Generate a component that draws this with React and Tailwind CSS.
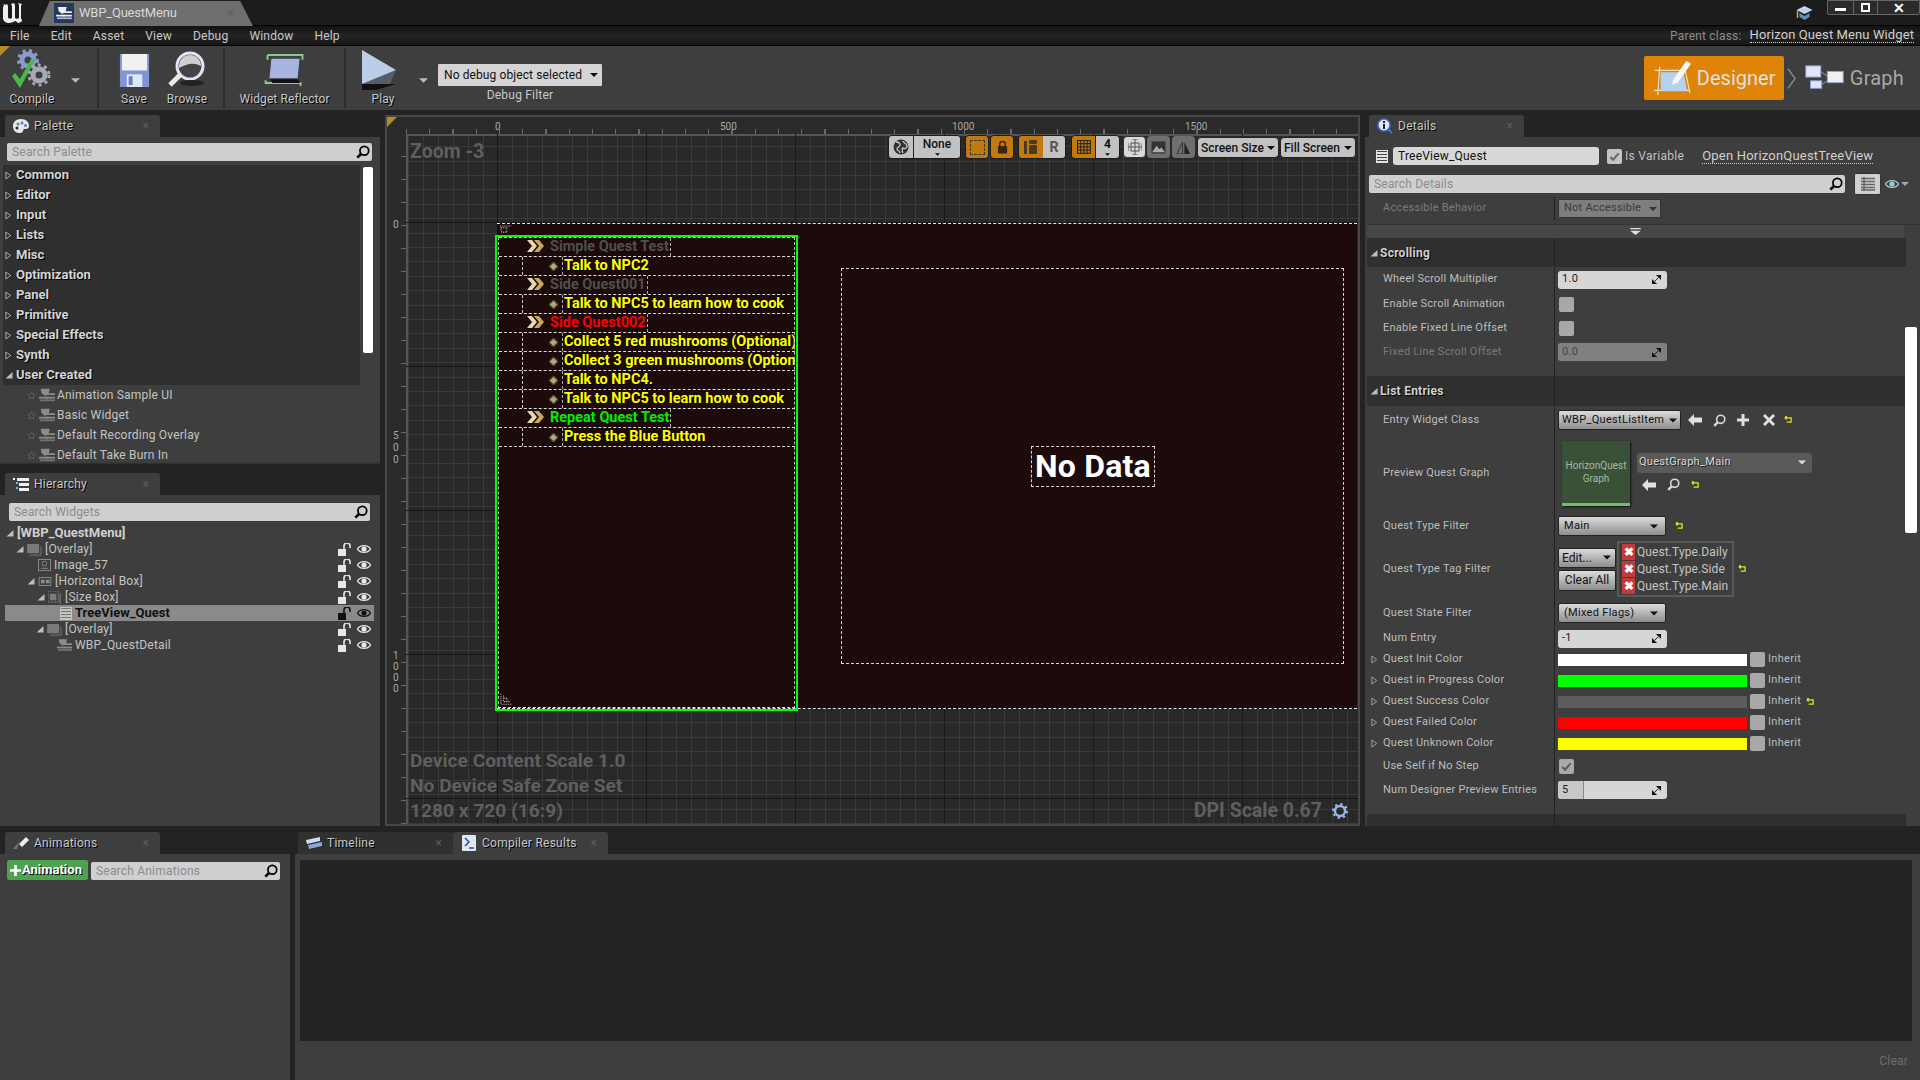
import React from "react";

const WidgetIcon = ({ c = "#8c8c8c", cls = "w-4 h-4" }) => (
  <svg viewBox="0 0 18 16" className={cls}>
    <path d="M2 1h10l-1 5-4 3-4-3z" fill={c} />
    <rect x="0" y="10" width="10" height="2" fill={c} />
    <rect x="8" y="6" width="10" height="2" fill={c} />
    <rect x="8" y="10" width="10" height="2" fill={c} />
    <rect x="1" y="13" width="17" height="2" fill={c} opacity=".7" />
  </svg>
);
const Search = ({ cls = "w-[14px] h-[14px]", c = "#000" }) => (
  <svg viewBox="0 0 16 16" className={cls}>
    <circle cx="9.5" cy="6.5" r="5" fill="none" stroke={c} strokeWidth="2" />
    <path d="M6 10L1.5 14.5" stroke={c} strokeWidth="3" />
  </svg>
);
const Caret = ({ c = "#111", cls = "w-[9px] h-[5px]" }) => (
  <svg viewBox="0 0 10 5" className={cls}><path d="M0 0h10L5 5z" fill={c} /></svg>
);
const TriOpen = ({ c = "#bdbdbd" }) => (
  <svg viewBox="0 0 8 8" className="w-2 h-2 shrink-0"><path d="M7.5 1v6.5H.5z" fill={c} /></svg>
);
const TriClosed = ({ c = "#bdbdbd" }) => (
  <svg viewBox="0 0 8 10" className="w-[7px] h-[9px] shrink-0"><path d="M1 1l5.5 4L1 9z" fill="none" stroke={c} strokeWidth="1" /></svg>
);
const Reset = () => (
  <svg viewBox="0 0 9 9" className="w-[8px] h-[8px]"><path d="M1 2h7v5H3M1 2l2-2M1 2l2 2" fill="none" stroke="#e6e619" strokeWidth="1.4" /></svg>
);
const Lock = ({ c = "#e6e6e6" }) => (
  <svg viewBox="0 0 14 13" className="w-[14px] h-[13px]">
    <rect x="0" y="6" width="8" height="7" fill={c} />
    <path d="M6 6V3a3 3 0 0 1 6 0v2" fill="none" stroke={c} strokeWidth="1.6" />
  </svg>
);
const Eye = ({ c = "#e6e6e6" }) => (
  <svg viewBox="0 0 14 10" className="w-[14px] h-[10px]">
    <path d="M0.5 5C3 0.5 11 0.5 13.5 5 11 9.5 3 9.5 0.5 5z" fill="none" stroke={c} strokeWidth="1.3" />
    <circle cx="7" cy="5" r="2.6" fill={c} />
  </svg>
);
const ArrowL = () => (
  <svg viewBox="0 0 14 12" className="w-[14px] h-[12px]"><path d="M0 6l6-6v3.5h8v5H6V12z" fill="#e0e0e0" /></svg>
);
const Mag = () => <Search c="#d8d8d8" cls="w-[13px] h-[13px]" />;
const Spin = () => (
  <svg viewBox="0 0 10 10" className="w-[9px] h-[9px]"><path d="M5 0h5v5zM0 5v5h5z M3 7l4-4" fill="#111" stroke="#111" /></svg>
);
const Star = () => (
  <svg viewBox="0 0 10 10" className="w-[9px] h-[9px]"><path d="M5 .8l1.2 2.9 3 .2-2.3 2 .8 3L5 7.3 2.3 8.9l.8-3L.8 3.9l3-.2z" fill="none" stroke="#666" strokeWidth=".8" /></svg>
);
const Close = () => <span className="text-[#5c5c5c] text-[12px] leading-none">×</span>;

const Tab = ({ icon, label, w = "w-[155px]", bg = "bg-[#3e3e3e]", x = "ml-[5px]" }) => (
  <div className={`${x} ${w} ${bg} h-[22px] rounded-t-[3px] flex items-center pl-[6px] pr-[11px] shrink-0`}>
    <span className="w-[20px] flex items-center justify-center shrink-0">{icon}</span>
    <span className="ml-[3px] text-[12px] text-[#c8c8c8] tracking-[0.25px] [text-shadow:1px_1px_0_#000] grow">{label}</span>
    <Close />
  </div>
);

const SearchBox = ({ ph, cls }) => (
  <div className={`h-[18px] bg-[#cfcfcf] rounded-[2px] flex items-center justify-between pl-[5px] pr-[2px] ${cls}`}>
    <span className="text-[12px] text-[#8c8c8c] tracking-[0.2px]">{ph}</span>
    <Search />
  </div>
);

const ToolBtn = ({ label, w, children }) => (
  <div className={`${w} h-full flex flex-col items-center shrink-0`}>
    <div className="h-[45px] flex items-center justify-center">{children}</div>
    <span className="text-[12px] text-[#c8c8c8] leading-[14px] [text-shadow:1px_1px_0_#000] tracking-[0.1px]">{label}</span>
  </div>
);

const Sep = () => <div className="w-[2px] h-[60px] bg-[#2c2c2c] shrink-0" />;

const cats = ["Common", "Editor", "Input", "Lists", "Misc", "Optimization", "Panel", "Primitive", "Special Effects", "Synth"];
const userItems = ["Animation Sample UI", "Basic Widget", "Default Recording Overlay", "Default Take Burn In"];

function Palette() {
  return (
    <div className="flex flex-col h-[351px] shrink-0">
      <Tab
        label="Palette"
        icon={
          <svg viewBox="0 0 16 14" className="w-4 h-[14px]">
            <path d="M8 0c5 0 8 3 8 7 0 3-3 3-4 3s-2 .5-2 2-2 2-4 2C2 14 0 11 0 7s3-7 8-7z" fill="#e8e8e8" />
            <circle cx="5" cy="5" r="1.5" fill="#5a7fc0" /><circle cx="9" cy="4" r="1.5" fill="#5a7fc0" /><circle cx="12.5" cy="6.5" r="1.5" fill="#5a7fc0" /><circle cx="4" cy="9" r="1.5" fill="#2b2b2b" />
          </svg>
        }
      />
      <div className="bg-[#3e3e3e] h-[329px] pt-[6px] pl-[7px] pr-[8px] relative shrink-0">
        <SearchBox ph="Search Palette" cls="w-[365px]" />
        <div className="-ml-[4px] mt-[4px] flex">
          <div className="w-[357px] shrink-0">
            {cats.concat(["User Created"]).map((c) => (
              <div key={c} className="h-[20px] bg-[#2f2f2f] flex items-center pl-[2px]">
                {c === "User Created" ? <TriOpen /> : <TriClosed />}
                <span className={`${c === "User Created" ? "ml-[3px]" : "ml-[4px]"} text-[13px] font-bold text-[#d4d4d4] [text-shadow:1px_1px_0_#000]`}>{c}</span>
              </div>
            ))}
            {userItems.map((c) => (
              <div key={c} className="h-[20px] flex items-center pl-[24px] overflow-hidden">
                <Star />
                <span className="ml-[3px]"><WidgetIcon /></span>
                <span className="ml-[2px] text-[12px] text-[#c4c4c4] tracking-[0.2px]">{c}</span>
              </div>
            ))}
          </div>
          <div className="ml-[3px] w-[10px] h-[186px] mt-[2px] bg-white rounded-[2px] shrink-0" />
        </div>
        <div className="absolute left-0 right-0 bottom-0 h-[4px] bg-linear-to-b from-[#2a2a2a00] to-[#1a1a1a]" />
      </div>
    </div>
  );
}

const tree = [
  { l: "[WBP_QuestMenu]", pad: "pl-[1px]", bold: true, tri: true, hdr: true },
  { l: "[Overlay]", pad: "pl-[11px]", tri: true, k: "ov" },
  { l: "Image_57", pad: "pl-[33px]", k: "img" },
  { l: "[Horizontal Box]", pad: "pl-[22px]", tri: true, k: "hb" },
  { l: "[Size Box]", pad: "pl-[32px]", tri: true, k: "sb" },
  { l: "TreeView_Quest", pad: "pl-[55px]", sel: true, k: "tv" },
  { l: "[Overlay]", pad: "pl-[31px]", tri: true, k: "ov" },
  { l: "WBP_QuestDetail", pad: "pl-[52px]", k: "w" },
];

const TreeIcon = ({ k }) => {
  if (k === "ov") return <svg viewBox="0 0 16 14" className="w-[15px] h-[13px]"><rect x="0" y="1" width="13" height="10" rx="1" fill="#7a7a7a" /><path d="M15 4v9H3" fill="none" stroke="#7a7a7a" /></svg>;
  if (k === "img") return <svg viewBox="0 0 14 14" className="w-[13px] h-[13px]"><rect x=".5" y=".5" width="13" height="12" fill="none" stroke="#8c8c8c" /><circle cx="7" cy="5" r="2.5" fill="none" stroke="#8c8c8c" /><path d="M3 10h8" stroke="#8c8c8c" /></svg>;
  if (k === "hb") return <svg viewBox="0 0 14 10" className="w-[14px] h-[9px]"><rect x=".5" y=".5" width="13" height="9" fill="none" stroke="#8c8c8c" /><rect x="2.5" y="3" width="4" height="4" fill="#8c8c8c" /><rect x="8" y="3" width="4" height="4" fill="#8c8c8c" /></svg>;
  if (k === "sb") return <svg viewBox="0 0 15 14" className="w-[14px] h-[13px]"><rect x="0" y="0" width="11" height="12" fill="none" stroke="#8c8c8c" strokeDasharray="1.5 1" /><rect x="2" y="3" width="7" height="7" fill="#7a7a7a" /><path d="M14 3h-1v10h1" fill="none" stroke="#8c8c8c" /></svg>;
  if (k === "tv") return <div className="w-[12px] h-[13px] bg-[#c4c4c4] flex flex-col justify-evenly px-[1px]"><div className="h-px bg-[#777]" /><div className="h-px bg-[#777]" /><div className="h-px bg-[#777]" /><div className="h-px bg-[#777]" /></div>;
  if (k === "w") return <WidgetIcon cls="w-[15px] h-[14px]" />;
  return null;
};

function Hierarchy() {
  return (
    <div className="flex flex-col mt-[7px] grow">
      <Tab
        label="Hierarchy"
        icon={
          <svg viewBox="0 0 16 13" className="w-4 h-[13px]">
            <rect x="0" y="0" width="2" height="2" fill="#fff" /><rect x="4" y="0" width="12" height="3" fill="#eee" /><rect x="3" y="4" width="2" height="2" fill="#6fb6e8" /><rect x="6" y="5" width="10" height="3" fill="#eee" /><rect x="3" y="9" width="2" height="2" fill="#6fb6e8" /><rect x="6" y="10" width="10" height="3" fill="#eee" />
          </svg>
        }
      />
      <div className="bg-[#3e3e3e] grow pt-[8px] pl-[9px] relative">
        <SearchBox ph="Search Widgets" cls="w-[361px]" />
        <div className="-ml-[9px] mt-[4px] w-[379px]">
          {tree.map((r, i) => (
            <div key={i} className={`h-[16px] flex items-center ml-[5px] w-[369px] pr-[3px] ${r.pad} ${r.sel ? "bg-[#8a8a8a]" : ""}`}>
              {r.tri && <span className="mr-[3px]"><TriOpen /></span>}
              {r.k && <span className="mr-[3px] flex items-center"><TreeIcon k={r.k} /></span>}
              <span className={`${r.sel ? "font-bold text-[#111] text-[13px]" : r.hdr ? "font-bold text-[#d0d0d0] text-[13px]" : "text-[#c4c4c4] text-[12px] tracking-[0.2px]"} grow`}>{r.l}</span>
              {!r.hdr && (
                <span className="flex items-center gap-[5px]">
                  <Lock c={r.sel ? "#111" : "#e6e6e6"} />
                  <Eye c={r.sel ? "#111" : "#e6e6e6"} />
                </span>
              )}
            </div>
          ))}
        </div>
      </div>
    </div>
  );
}

const VGroup = ({ children, cls = "" }) => (
  <div className={`flex h-[24px] rounded-[4px] overflow-hidden border border-[#1c1c1c] shrink-0 ${cls}`}>{children}</div>
);
const Drop = ({ w, label }) => (
  <div className={`${w} h-[21px] mt-[2px] rounded-[4px] border border-[#222] bg-[#c2c2c2] flex items-center justify-between px-[3px] shrink-0`}>
    <span className="text-[12px] font-medium text-[#111]">{label}</span>
    <Caret cls="w-[8px] h-[4px]" />
  </div>
);

const questRows = [
  { t: "p", l: "Simple Quest Test", c: "text-[#4f4f4f]" },
  { t: "c", l: "Talk to NPC2" },
  { t: "p", l: "Side Quest001", c: "text-[#4f4f4f]" },
  { t: "c", l: "Talk to NPC5 to learn how to cook" },
  { t: "p", l: "Side Quest002", c: "text-[#ff0000]" },
  { t: "c", l: "Collect 5 red mushrooms (Optional)" },
  { t: "c", l: "Collect 3 green mushrooms (Optional)" },
  { t: "c", l: "Talk to NPC4." },
  { t: "c", l: "Talk to NPC5 to learn how to cook" },
  { t: "p", l: "Repeat Quest Test", c: "text-[#00ee00]" },
  { t: "c", l: "Press the Blue Button" },
];

const Chevrons = () => (
  <svg viewBox="0 0 18 12" className="w-[18px] h-[12px] shrink-0">
    <path d="M0 0h5l5 6-5 6H0l5-6z" fill="#e6d9b0" />
    <path d="M7 0h5l5 6-5 6H7l5-6z" fill="#c9a85c" />
  </svg>
);
const Diamond = () => (
  <svg viewBox="0 0 10 10" className="w-[9px] h-[9px] shrink-0"><path d="M5 0l5 5-5 5-5-5z" fill="#b8a878" stroke="#443" strokeWidth="1.5" /></svg>
);

function Viewport() {
  return (
    <div className="w-[975px] h-full relative overflow-hidden bg-[#2a2a2a] border-2 border-[#474747] shrink-0">
      <div className="absolute left-[19px] top-[17px] right-0 bottom-0 border-l-2 border-t-2 border-[#555] bg-[#282828] bg-[image:repeating-linear-gradient(90deg,#3a3a3a_0,#3a3a3a_1px,transparent_1px,transparent_14.9px),repeating-linear-gradient(0deg,#3a3a3a_0,#3a3a3a_1px,transparent_1px,transparent_14.4px)]" />
      <div className="absolute left-[110px] top-[17px] bottom-0 w-full bg-[image:repeating-linear-gradient(90deg,#181818_0,#181818_1px,transparent_1px,transparent_149px)]" />
      <div className="absolute left-[19px] top-[105px] bottom-0 right-0 bg-[image:repeating-linear-gradient(180deg,#181818_0,#181818_1px,transparent_1px,transparent_144px)]" />

      <div className="absolute left-0 top-0 w-0 h-0 border-t-[10px] border-r-[10px] border-t-[#b58a20] border-r-transparent" />

      <span className="absolute left-[108px] top-[2px] text-[10px] text-[#a8a8a8]">0</span>
      <span className="absolute left-[333px] top-[2px] text-[10px] text-[#a8a8a8]">500</span>
      <span className="absolute left-[565px] top-[2px] text-[10px] text-[#a8a8a8]">1000</span>
      <span className="absolute left-[798px] top-[2px] text-[10px] text-[#a8a8a8]">1500</span>
      <div className="absolute left-[19px] top-[12px] right-0 h-[5px] bg-[image:repeating-linear-gradient(90deg,#6a6a6a_0,#6a6a6a_1px,transparent_1px,transparent_23.25px)]" />
      <div className="absolute left-[14px] top-[17px] bottom-0 w-[5px] bg-[image:repeating-linear-gradient(0deg,#6a6a6a_0,#6a6a6a_1px,transparent_1px,transparent_23px)]" />
      <span className="absolute left-[6px] top-[100px] text-[10px] text-[#a8a8a8]">0</span>
      <div className="absolute left-[6px] top-[313px] flex flex-col text-[10px] leading-[12px] text-[#a8a8a8]"><span>5</span><span>0</span><span>0</span></div>
      <div className="absolute left-[6px] top-[533px] flex flex-col text-[10px] leading-[11px] text-[#a8a8a8]"><span>1</span><span>0</span><span>0</span><span>0</span></div>

      <div className="absolute left-[110px] top-[106px] w-[860px] h-[486px] bg-[#1c0a08f0] border-y border-dashed border-[#e8e8e8]">
        <div className="absolute left-[344px] top-[44px] w-[503px] h-[396px] border border-dashed border-[#d8d8d8]" />
        <div className="absolute left-[534px] top-[222px] w-[124px] h-[41px] border border-dashed border-[#d8d8d8] flex items-center justify-center pb-[2px]">
          <span className="text-[32px] font-bold text-white leading-none whitespace-nowrap tracking-[0.2px]">No Data</span>
        </div>
        <div className="absolute -left-[2px] top-[11px] w-[303px] h-[476px] border-[2px] border-[#00ff00] pl-[2px] pr-[1px]">
          <div className="border-t border-dashed border-[#ddd]">
            {questRows.map((r, i) => (
              <div key={i} className="h-[19px] flex items-center border-b border-dashed border-[#ddd] overflow-hidden whitespace-nowrap">
                {r.t === "p" ? (
                  <>
                    <span className="ml-[28px] -mt-[2px]"><Chevrons /></span>
                    <span className={`ml-[5px] pr-[1px] border-r border-dashed border-[#aaa] h-full leading-[17px] text-[14.5px] font-bold ${r.c}`}>{r.l}</span>
                  </>
                ) : (
                  <>
                    <span className="ml-[23px] w-px h-full border-l border-dashed border-[#ccc]" />
                    <span className="ml-[26px]"><Diamond /></span>
                    <span className="ml-[4px] pl-[1px] border-l border-dashed border-[#aaa] h-full leading-[17px] text-[14.5px] font-bold text-[#ffff00] [text-shadow:1px_1px_0_#000]">{r.l}</span>
                  </>
                )}
              </div>
            ))}
          </div>
          <div className="absolute right-[1px] top-0 bottom-0 border-r border-dashed border-[#bbb]" />
          <div className="absolute left-[1px] top-0 bottom-0 border-l border-dashed border-[#bbb]" />
          <div className="absolute left-[1px] right-[1px] bottom-[1px] border-b border-dashed border-[#ddd]" />
          <svg viewBox="0 0 16 16" className="absolute left-[3px] bottom-[3px] w-[14px] h-[14px]"><path d="M1 2v12h12M4 4v7h7M4 7h4v4" fill="none" stroke="#aaa" strokeWidth="1.2" strokeDasharray="1.5 1" /></svg>
        </div>
        <svg viewBox="0 0 16 10" className="absolute left-[2px] top-[1px] w-[14px] h-[9px]"><path d="M1 1h13M2 3h7v5H3z" fill="none" stroke="#aaa" strokeWidth="1.2" strokeDasharray="1.5 1" /></svg>
      </div>

      <span className="absolute left-[23px] top-[21px] text-[19.500px] font-bold leading-[28px] text-[#5f5f5f]">Zoom -3</span>
      <div className="absolute left-[23px] top-[631px] flex flex-col text-[19.200px] font-bold leading-[25px] text-[#5f5f5f]">
        <span>Device Content Scale 1.0</span>
        <span>No Device Safe Zone Set</span>
        <span>1280 x 720 (16:9)</span>
      </div>
      <div className="absolute right-[10px] bottom-[1px] flex items-center gap-[10px]">
        <span className="text-[19.500px] font-bold leading-[25px] text-[#5f5f5f]">DPI Scale 0.67</span>
        <svg viewBox="0 0 16 16" className="w-4 h-4">
          <circle cx="8" cy="8" r="5" fill="none" stroke="#9db4ea" strokeWidth="2.4" />
          <circle cx="8" cy="8" r="7" fill="none" stroke="#9db4ea" strokeWidth="2" strokeDasharray="2.4 3.1" />
        </svg>
      </div>

      <div className="absolute left-[501px] top-[18px] flex items-start">
        <VGroup cls="w-[73px]">
          <div className="w-[25px] bg-[#c2c2c2] border-r border-[#222] flex items-center justify-center">
            <svg viewBox="0 0 16 16" className="w-4 h-4"><circle cx="8" cy="8" r="7.5" fill="#333" /><path d="M3 3c3 0 4 1 4 3S4 8 4 10s3 1 3 4M10 2c0 2 4 2 4 5s-3 3-4 2-1 3 0 5" fill="none" stroke="#ccc" strokeWidth="1.3" /></svg>
          </div>
          <div className="grow bg-[#c2c2c2] flex flex-col items-center pt-[1px]">
            <span className="text-[12px] font-medium leading-[15px] text-[#111]">None</span>
            <Caret cls="w-[5px] h-[3px] mt-[1px]" />
          </div>
        </VGroup>
        <VGroup cls="w-[24px] ml-[4px]">
          <div className="grow bg-[#c07a10] flex items-center justify-center"><div className="w-[15px] h-[15px] border border-dashed border-[#4a3a22]" /></div>
        </VGroup>
        <VGroup cls="w-[24px] ml-[1px]">
          <div className="grow bg-[#c07a10] flex items-center justify-center">
            <svg viewBox="0 0 12 14" className="w-[11px] h-[14px]"><rect x="1" y="6" width="10" height="8" rx="1" fill="#3a2510" /><path d="M3 6V4a3 3 0 0 1 6 0v2" fill="none" stroke="#3a2510" strokeWidth="1.5" /></svg>
          </div>
        </VGroup>
        <VGroup cls="w-[48px] ml-[4px]">
          <div className="w-[24px] bg-[#c07a10] flex items-center justify-center">
            <svg viewBox="0 0 14 14" className="w-[14px] h-[14px]"><rect x="0" y="1" width="3" height="13" fill="#4a3a22" /><rect x="5" y="5" width="8" height="9" rx="1" fill="#4a3a22" /><rect x="5" y="0" width="8" height="4" rx="1" fill="#4a3a22" /></svg>
          </div>
          <div className="grow bg-[#c2c2c2] flex items-center justify-center text-[14px] font-bold text-[#555]">R</div>
        </VGroup>
        <VGroup cls="w-[49px] ml-[5px]">
          <div className="w-[24px] bg-[#c07a10] border-r border-[#222] flex items-center justify-center">
            <svg viewBox="0 0 14 14" className="w-[14px] h-[14px]"><path d="M.5 0v14M3.7 0v14M6.9 0v14M10.1 0v14M13.3 0v14M0 .5h14M0 3.7h14M0 6.9h14M0 10.1h14M0 13.3h14" stroke="#222" strokeWidth="1" /></svg>
          </div>
          <div className="grow bg-[#c2c2c2] flex flex-col items-center pt-[1px]">
            <span className="text-[12px] font-bold leading-[15px] text-[#111]">4</span>
            <Caret cls="w-[5px] h-[3px] mt-[1px]" />
          </div>
        </VGroup>
        <div className="w-[23px] h-[22px] mt-[1px] ml-[3px] rounded-[4px] bg-[#d8d8d8] border border-[#333] flex items-center justify-center shrink-0">
          <svg viewBox="0 0 14 16" className="w-[14px] h-[16px]"><rect x="3" y="4" width="8" height="8" fill="none" stroke="#555" /><path d="M7 0v16M0 8h14M0 4v8M14 4v8M4 0h6M4 16h6" stroke="#555" fill="none" /></svg>
        </div>
        <div className="w-[23px] h-[22px] mt-[1px] ml-[1px] rounded-[4px] bg-[#6f6f6f] flex items-center justify-center shrink-0">
          <svg viewBox="0 0 16 14" className="w-[15px] h-[13px]"><rect x=".5" y=".5" width="15" height="13" fill="#333" /><path d="M1 12l5-7 3 4 2-2 4 5z" fill="#aaa" /></svg>
        </div>
        <div className="w-[23px] h-[22px] mt-[1px] ml-[2px] rounded-[4px] bg-[#6f6f6f] flex items-center justify-center shrink-0">
          <svg viewBox="0 0 16 14" className="w-[15px] h-[13px]"><path d="M7 1v13H1z" fill="none" stroke="#333" /><path d="M9 1v13h6z" fill="#222" /></svg>
        </div>
        <Drop w="w-[82px] ml-[2px]" label="Screen Size" />
        <Drop w="w-[76px] ml-[1px]" label="Fill Screen" />
      </div>
    </div>
  );
}

const Row = ({ h, label, dim, tri, children }) => (
  <div className={`${h} flex items-stretch shrink-0`}>
    <div className="w-[187px] shrink-0 flex items-center pl-[4px]">
      <span className="w-[12px] flex items-center">{tri && <TriClosed c="#aaa" />}</span>
      <span className={`text-[11px] tracking-[0.25px] whitespace-nowrap ${dim ? "text-[#7a7a7a]" : "text-[#bdbdbd]"}`}>{label}</span>
    </div>
    <div className="grow flex items-center pl-[3px] border-l border-[#222]">{children}</div>
  </div>
);

const Num = ({ v, dim, slider }) => (
  <div className={`w-[109px] h-[18px] rounded-[3px] flex items-center justify-between pr-[6px] relative ${dim ? "bg-[#808080]" : "bg-[#d6d6d6]"}`}>
    {slider && <div className="absolute left-0 top-0 bottom-0 w-[26px] bg-[#c8c8c8] border-r border-[#888] rounded-l-[3px]" />}
    <span className={`relative pl-[4px] text-[11px] ${dim ? "text-[#444]" : "text-[#222]"} tracking-[0.3px]`}>{v}</span>
    <Spin />
  </div>
);
const Check = ({ on }) => (
  <div className="w-[15px] h-[15px] ml-[1px] rounded-[2px] bg-[#a8a8a8] flex items-center justify-center">
    {on && <svg viewBox="0 0 12 12" className="w-[11px] h-[11px]"><path d="M1.5 6.5l3 3 6-7" fill="none" stroke="#5a5a5a" strokeWidth="2.2" /></svg>}
  </div>
);
const GDrop = ({ w, label }) => (
  <div className={`${w} h-[20px] rounded-[2px] border border-[#222] bg-linear-to-b from-[#dcdcdc] to-[#8e8e8e] flex items-center justify-between pl-[5px] pr-[7px]`}>
    <span className="text-[11px] tracking-[0.3px] text-[#111]">{label}</span>
    <Caret cls="w-[8px] h-[5px]" />
  </div>
);
const Section = ({ label, h }) => (
  <div className={`${h} bg-[#2f2f2f] rounded-[2px] flex items-stretch shrink-0 mr-[14px]`}>
    <div className="w-[187px] flex items-center pl-[3px] shrink-0">
      <TriOpen />
      <span className="ml-[2px] text-[12px] font-bold text-[#d0d0d0] [text-shadow:1px_1px_0_#000] tracking-[0.25px]">{label}</span>
    </div>
    <div className="border-l border-[#222]" />
  </div>
);

const ColorRow = ({ label, c, reset }) => (
  <Row h="h-[21px]" label={label} tri>
    <div className={`w-[189px] h-[12px] ${c}`} />
    <div className="w-[15px] h-[15px] ml-[3px] rounded-[2px] bg-[#a8a8a8]" />
    <span className="ml-[3px] text-[11px] tracking-[0.3px] text-[#bdbdbd]">Inherit</span>
    {reset && <span className="ml-[5px] flex"><Reset /></span>}
  </Row>
);
const TagRow = ({ l }) => (
  <div className="h-[17px] flex items-center pl-[3px]">
    <div className="w-[13px] h-[16px] bg-[#c23a3a] flex items-center justify-center text-white text-[12px] font-bold leading-none">✖</div>
    <span className="ml-[2px] text-[12px] text-[#c4c4c4] tracking-[0.1px]">{l}</span>
  </div>
);

function Details() {
  return (
    <div className="flex flex-col w-[555px] shrink-0 h-full">
      <Tab
        x="ml-[4px]"
        label="Details"
        icon={
          <svg viewBox="0 0 16 16" className="w-4 h-4"><circle cx="7" cy="7" r="6" fill="#dfe6f5" stroke="#4a6fd0" strokeWidth="1.5" /><rect x="6" y="6" width="2" height="5" fill="#223" /><rect x="6" y="3" width="2" height="2" fill="#223" /><path d="M11 11l4 4" stroke="#4a6fd0" strokeWidth="2" /></svg>
        }
      />
      <div className="bg-[#3e3e3e] grow flex flex-col overflow-hidden relative">
        <div className="h-[60px] shrink-0">
          <div className="flex items-center h-[18px] mt-[10px]">
            <div className="ml-[11px] w-[12px] h-[13px] bg-[#e4e4e4] flex flex-col justify-evenly px-[1px]"><div className="h-px bg-[#444]" /><div className="h-px bg-[#444]" /><div className="h-px bg-[#444]" /><div className="h-px bg-[#444]" /></div>
            <div className="ml-[5px] w-[206px] h-[18px] bg-[#d8d8d8] rounded-[3px] flex items-center pl-[5px] text-[12px] tracking-[0.2px] text-[#111]">TreeView_Quest</div>
            <div className="ml-[8px] w-[15px] h-[15px] bg-[#c4c4c4] rounded-[2px] flex items-center justify-center">
              <svg viewBox="0 0 12 12" className="w-[11px] h-[11px]"><path d="M1.5 6.5l3 3 6-7" fill="none" stroke="#666" strokeWidth="2.2" /></svg>
            </div>
            <span className="ml-[3px] text-[12px] text-[#c0c0c0] tracking-[0.3px]">Is Variable</span>
            <span className="ml-[18px] text-[13px] tracking-[0.2px] text-[#d0d0d0] border-b border-dotted border-[#d0d0d0] leading-[15px]">Open HorizonQuestTreeView</span>
          </div>
          <div className="flex items-center mt-[8px]">
            <SearchBox ph="Search Details" cls="ml-[4px] w-[476px]" />
            <div className="ml-[9px] w-[27px] h-[22px] bg-[#cfcfcf] rounded-[2px] border border-[#333] flex items-center justify-center">
              <svg viewBox="0 0 14 14" className="w-[14px] h-[14px]"><path d="M0 1.5h14M0 4.5h14M0 7.5h14M0 10.5h14M0 13h14M3 0v14" stroke="#666" strokeWidth="1.5" fill="none" /></svg>
            </div>
            <span className="ml-[4px]"><Eye c="#9cc" /></span>
            <span className="ml-[2px]"><Caret c="#aaa" cls="w-[8px] h-[4px]" /></span>
          </div>
        </div>
        <div className="pl-[2px] flex flex-col">
          <Row h="h-[23px]" label="Accessible Behavior" dim>
            <div className="w-[103px] h-[19px] bg-[#7e7e7e] rounded-[1px] border border-[#333] flex items-center justify-between pl-[5px] pr-[3px]">
              <span className="text-[11px] text-[#3a3a3a] tracking-[0.25px] whitespace-nowrap">Not Accessible</span>
              <Caret c="#333" cls="w-[8px] h-[4px]" />
            </div>
          </Row>
          <div className="h-[5px] shrink-0 border-b border-[#333]" />
          <div className="h-[13px] shrink-0 bg-[#474747] flex items-center justify-center mr-[16px]">
            <svg viewBox="0 0 12 8" className="w-[11px] h-[7px]"><path d="M0 0h12v1.5H0zM0 3h12L6 8z" fill="#ddd" /></svg>
          </div>
          <Section label="Scrolling" h="h-[29px]" />
          <Row h="h-[25px]" label="Wheel Scroll Multiplier"><Num v="1.0" /></Row>
          <Row h="h-[24px]" label="Enable Scroll Animation"><Check /></Row>
          <Row h="h-[24px]" label="Enable Fixed Line Offset"><Check /></Row>
          <Row h="h-[24px]" label="Fixed Line Scroll Offset" dim><Num v="0.0" dim /></Row>
          <div className="h-[12px] shrink-0 ml-[187px] border-l border-[#222]" />
          <Section label="List Entries" h="h-[30px]" />
          <Row h="h-[28px]" label="Entry Widget Class">
            <div className="w-[123px] h-[20px] rounded-[2px] border border-[#222] bg-linear-to-b from-[#dcdcdc] to-[#8e8e8e] flex items-center justify-between pl-[3px] pr-[3px]">
              <span className="text-[11px] tracking-[0.3px] text-[#111] whitespace-nowrap">WBP_QuestListItem</span>
              <Caret cls="w-[8px] h-[5px]" />
            </div>
            <span className="ml-[7px]"><ArrowL /></span>
            <span className="ml-[11px]"><Mag /></span>
            <span className="ml-[11px]"><svg viewBox="0 0 12 12" className="w-[12px] h-[12px]"><path d="M4.5 0h3v4.500H12v3H7.500V12h-3V7.500H0v-3h4.500z" fill="#e0e0e0" /></svg></span>
            <span className="ml-[14px]"><svg viewBox="0 0 12 12" className="w-[12px] h-[12px]"><path d="M2 0l4 4 4-4 2 2-4 4 4 4-2 2-4-4-4 4-2-2 4-4-4-4z" fill="#e0e0e0" /></svg></span>
            <span className="ml-[9px] flex"><Reset /></span>
          </Row>
          <Row h="h-[78px]" label="Preview Quest Graph">
            <div className="ml-[4px] w-[68px] h-[65px] bg-[#3a5138] shadow-[1px_1px_2px_#111] flex flex-col shrink-0">
              <div className="grow flex items-center justify-center text-center text-[10px] leading-[13px] text-[#a9b8a6]">HorizonQuest<br />Graph</div>
              <div className="h-[3px] bg-[#6fbf6a]" />
            </div>
            <div className="ml-[7px] flex flex-col mt-[3px]">
              <div className="w-[175px] h-[20px] rounded-[3px] bg-[#5a5a5a] flex items-center justify-between pl-[2px] pr-[6px]">
                <span className="text-[11px] tracking-[0.3px] text-[#d8d8d8] [text-shadow:1px_1px_0_#222]">QuestGraph_Main</span>
                <Caret c="#ddd" cls="w-[8px] h-[5px]" />
              </div>
              <div className="flex items-center h-[24px] pl-[5px]">
                <ArrowL />
                <span className="ml-[11px]"><Mag /></span>
                <span className="ml-[11px] flex"><Reset /></span>
              </div>
            </div>
          </Row>
          <Row h="h-[28px]" label="Quest Type Filter">
            <GDrop w="w-[108px]" label="Main" />
            <span className="ml-[9px] flex"><Reset /></span>
          </Row>
          <Row h="h-[58px]" label="Quest Type Tag Filter">
            <div className="w-[58px] flex flex-col gap-[2px]">
              <div className="h-[20px] rounded-[2px] border border-[#222] bg-linear-to-b from-[#dcdcdc] to-[#8e8e8e] flex items-center justify-between pl-[3px] pr-[4px]">
                <span className="text-[12px] text-[#111]">Edit...</span>
                <Caret cls="w-[8px] h-[5px]" />
              </div>
              <div className="h-[21px] rounded-[2px] border border-[#222] bg-linear-to-b from-[#dcdcdc] to-[#8e8e8e] flex items-center justify-center text-[12px] text-[#111]">Clear All</div>
            </div>
            <div className="ml-[1px] w-[117px] h-[56px] border-2 border-[#595959] flex flex-col justify-center">
              <TagRow l="Quest.Type.Daily" />
              <TagRow l="Quest.Type.Side" />
              <TagRow l="Quest.Type.Main" />
            </div>
            <span className="ml-[4px] flex"><Reset /></span>
          </Row>
          <Row h="h-[30px]" label="Quest State Filter"><GDrop w="w-[108px]" label="(Mixed Flags)" /></Row>
          <Row h="h-[21px]" label="Num Entry"><Num v="-1" /></Row>
          <ColorRow label="Quest Init Color" c="bg-white" />
          <ColorRow label="Quest in Progress Color" c="bg-[#00ff00]" />
          <ColorRow label="Quest Success Color" c="bg-[#5c5c5c]" reset />
          <ColorRow label="Quest Failed Color" c="bg-[#ff0000]" />
          <ColorRow label="Quest Unknown Color" c="bg-[#ffff00]" />
          <Row h="h-[24px]" label="Use Self if No Step"><Check on /></Row>
          <Row h="h-[24px]" label="Num Designer Preview Entries"><Num v="5" slider /></Row>
          <div className="h-[12px] shrink-0 ml-[187px] border-l border-[#222]" />
          <Section label="" h="h-[30px]" />
        </div>
        <div className="absolute right-[3px] top-[190px] w-[12px] h-[206px] bg-white rounded-[2px]" />
      </div>
    </div>
  );
}

export default function App() {
  return (
    <div className="w-[1920px] h-[1080px] overflow-hidden bg-[#232323] flex flex-col font-['Roboto',sans-serif]">
      <div className="h-[26px] shrink-0 bg-[#1c1c1c] border-b border-black flex relative">
        <svg viewBox="0 0 20 22" className="absolute left-[2px] top-[2px] w-[20px] h-[22px]">
          <path d="M1 2c2 1 3 1 4 0l1 2v11c0 2 3 2 4 1V4l-1-2 3-1 1 2v13c1 1 3 1 4 0V3l-1-2 4 1c-1 1-1 2-1 3v12l2 1c-2 2-4 3-5 3-1-1-2-2-3-2-2 1-4 2-6 2-3 0-6-2-6-5V5C2 4 2 3 1 2z" fill="#f0f0f0" />
        </svg>
        <div className="ml-[39px] mt-[1px] w-[214px] h-[25px] bg-[#6e6e6e] [clip-path:polygon(0_100%,5%_0,94%_0,100%_100%)] flex items-center pl-[15px] pr-[19px] pb-[2px]">
          <span className="w-[20px] h-[20px] bg-[#23385c] flex items-center justify-center"><WidgetIcon c="#eee" cls="w-[16px] h-[14px]" /></span>
          <span className="ml-[5px] text-[13px] text-[#d8d8d8] tracking-[-0.2px] grow">WBP_QuestMenu</span>
          <Close />
        </div>
        <div className="grow" />
        <svg viewBox="0 0 16 16" className="w-[17px] h-[16px] mt-[5px] mr-[14px]"><path d="M0 5l8-4 8 4-8 4z" fill="#bcd6ee" /><path d="M3 8v4l5 3 5-3V8l-5 3z" fill="#5c8fc0" /><path d="M1 6v7" stroke="#d9a441" strokeWidth="1.5" /></svg>
        <div className="w-[93px] h-[15px] flex bg-[#2b2b2b] border border-[#666] rounded-b-[2px] shrink-0">
          <div className="w-[26px] border-r border-[#666] flex items-center justify-center"><div className="w-[11px] h-[3px] bg-white mt-[3px]" /></div>
          <div className="w-[24px] border-r border-[#666] flex items-center justify-center"><div className="w-[9px] h-[9px] border-2 border-white" /></div>
          <div className="grow flex items-center justify-center text-white text-[14px] font-bold leading-none">✕</div>
        </div>
      </div>
      <div className="h-[20px] shrink-0 bg-linear-to-b from-[#121212] via-[#242424] to-[#161616] border-b border-black flex items-center relative">
        {[["File","ml-[10px]"],["Edit","ml-[21px]"],["Asset","ml-[21px]"],["View","ml-[21px]"],["Debug","ml-[21px]"],["Window","ml-[21px]"],["Help","ml-[21px]"]].map(([m,c]) => (
          <span key={m} className={`${c} text-[12px] tracking-[0.2px] text-[#c8c8c8]`}>{m}</span>
        ))}
        <div className="grow" />
        <span className="text-[12px] tracking-[0.2px] text-[#8c8c8c]">Parent class:</span>
        <span className="ml-[8px] mr-[6px] text-[13px] tracking-[0.1px] text-[#d0d0d0] border-b border-dotted border-[#ddd] leading-[14px]">Horizon Quest Menu Widget</span>
      </div>
      <div className="h-[64px] shrink-0 bg-[#3e3e3e] flex items-center relative">
        <div className="absolute left-0 top-0 w-0 h-0 border-t-[10px] border-r-[10px] border-t-[#b58a20] border-r-transparent" />
        <ToolBtn label="Compile" w="w-[64px] mt-[2px]">
          <svg viewBox="0 0 42 44" className="w-[42px] h-[44px]">
            <circle cx="17" cy="12" r="6" fill="none" stroke="#8a9bcf" strokeWidth="5" />
            <circle cx="17" cy="12" r="9.500" fill="none" stroke="#8a9bcf" strokeWidth="3" strokeDasharray="3 3.500" />
            <circle cx="28" cy="27" r="6" fill="none" stroke="#a8a8b8" strokeWidth="5" />
            <circle cx="28" cy="27" r="10" fill="none" stroke="#a8a8b8" strokeWidth="3" strokeDasharray="3 3.500" />
            <path d="M1 28l8 12L24 12l-4-1-11 20-5-6z" fill="#49b849" />
          </svg>
        </ToolBtn>
        <div className="w-[33px] shrink-0 pt-[5px] pl-[7px]"><Caret c="#bbb" /></div>
        <Sep />
        <div className="w-[12px] shrink-0" />
        <ToolBtn label="Save" w="w-[46px] mt-[2px]">
          <svg viewBox="0 0 34 36" className="w-[33px] h-[35px]">
            <path d="M2 2h30v34H2z" fill="#7f95d6" />
            <rect x="4" y="2" width="26" height="17" fill="#f0f0f0" />
            <rect x="9" y="23" width="16" height="13" fill="#dfe6f5" />
            <rect x="11" y="25" width="4" height="9" fill="#6a7fc0" />
          </svg>
        </ToolBtn>
        <ToolBtn label="Browse" w="w-[46px] ml-[7px] mt-[2px]">
          <svg viewBox="0 0 38 38" className="w-[38px] h-[38px]">
            <circle cx="22" cy="15" r="13" fill="#444" stroke="#e0e6f5" strokeWidth="3" />
            <path d="M11 15a11 11 0 0 1 22 0c-8-4-14-2-22 2z" fill="#cfcfcf" />
            <path d="M12 24L2 34" stroke="#e8e8e8" strokeWidth="5" />
            <ellipse cx="24" cy="32" rx="12" ry="3" fill="#222" />
          </svg>
        </ToolBtn>
        <div className="w-[13px] shrink-0" />
        <Sep />
        <ToolBtn label="Widget Reflector" w="w-[119px] mt-[2px]">
          <svg viewBox="0 0 42 34" className="w-[42px] h-[33px]">
            <path d="M3 2h36v5M3 2v5" fill="none" stroke="#8fc78f" strokeWidth="2" />
            <path d="M7 6h29l-2 20H5z" fill="#a8b4e0" />
            <path d="M1 28v3h36v4" fill="none" stroke="#8fc78f" strokeWidth="2" />
            <path d="M6 27h28l3 4H8z" fill="#111" />
          </svg>
        </ToolBtn>
        <Sep />
        <div className="w-[16px] shrink-0" />
        <ToolBtn label="Play" w="w-[42px] mt-[2px]">
          <svg viewBox="0 0 34 40" className="w-[34px] h-[40px] -ml-[8px] shrink-0">
            <path d="M0 0l34 20L0 34z" fill="#bccde8" />
            <path d="M0 34l34-14 0 0-6 14z" fill="#8da4c8" opacity=".3" />
            <path d="M0 34h34L14 40H0z" fill="#111" />
          </svg>
        </ToolBtn>
        <div className="w-[34px] shrink-0 pt-[5px] pl-[15px]"><Caret c="#bbb" /></div>
        <div className="w-[164px] flex flex-col items-center shrink-0 self-start pt-[18px]">
          <div className="w-[164px] h-[22px] bg-[#d4d4d4] rounded-[1px] flex items-center justify-between pl-[6px] pr-[4px]">
            <span className="text-[12px] text-[#111] tracking-[0.1px]">No debug object selected</span>
            <Caret cls="w-[8px] h-[4px]" />
          </div>
          <span className="mt-[1px] text-[12px] tracking-[0.2px] text-[#c8c8c8] leading-[16px]">Debug Filter</span>
        </div>
        <div className="grow" />
        <div className="w-[140px] h-[44px] -mt-[1px] bg-[#df8408] rounded-[2px] flex items-center pl-[8px] shrink-0">
          <svg viewBox="0 0 42 40" className="w-[40px] h-[38px] shrink-0">
            <path d="M3 12h32M8 8l-2 30M34 8l6 28M2 33h38" stroke="#f0e4c8" strokeWidth="1.2" fill="none" />
            <path d="M9 14h24l4 20H9z" fill="#b6d2ef" />
            <path d="M22 22l14-20 5 3-14 20-6 2z" fill="#f5f8ff" />
          </svg>
          <span className="ml-[5px] text-[20px] text-[#e0e0e0]">Designer</span>
        </div>
        <svg viewBox="0 0 10 24" className="ml-[3px] w-[9px] h-[23px] shrink-0"><path d="M1 1l8 11-8 11" fill="none" stroke="#8c8c8c" strokeWidth="1.5" /></svg>
        <svg viewBox="0 0 42 30" className="ml-[8px] w-[41px] h-[28px] shrink-0">
          <rect x="1" y="2" width="16" height="12" fill="#dfe6f5" stroke="#8da4d8" />
          <rect x="24" y="8" width="17" height="12" fill="#f0f0f0" stroke="#8da4d8" />
          <rect x="6" y="18" width="12" height="8" fill="#dfe6f5" stroke="#8da4d8" />
          <path d="M17 8l7 5M18 22l6-4" stroke="#8da4d8" />
        </svg>
        <span className="ml-[5px] mr-[16px] text-[20px] tracking-[0.2px] text-[#a8a8a8]">Graph</span>
      </div>
      <div className="flex gap-[5px] h-[716px] shrink-0 pt-[5px]">
        <div className="w-[380px] h-full flex flex-col shrink-0"><Palette /><Hierarchy /></div>
        <Viewport />
        <Details />
      </div>
      <div className="flex grow gap-[5px] pt-[6px]">
        <div className="w-[290px] flex flex-col shrink-0">
          <Tab label="Animations" icon={<svg viewBox="0 0 16 14" className="w-4 h-[14px]"><path d="M0 13l6-7-2 7z" fill="#777" /><path d="M6 8l7-7 3 3-7 7z" fill="#eee" /></svg>} />
          <div className="bg-[#3e3e3e] grow flex pl-[7px] pt-[6px] gap-[3px] items-start">
            <div className="w-[81px] h-[20px] bg-[#4fa350] rounded-[2px] flex items-center pl-[3px] text-white">
              <svg viewBox="0 0 10 10" className="w-[11px] h-[11px] shrink-0"><path d="M3.800 0h2.400v3.800H10v2.400H6.200V10H3.800V6.200H0V3.800h3.800z" fill="#fff" /></svg>
              <span className="ml-[1px] text-[13px] font-bold [text-shadow:1px_1px_0_#000]">Animation</span>
            </div>
            <SearchBox ph="Search Animations" cls="w-[189px] mt-[2px]" />
          </div>
        </div>
        <div className="grow flex flex-col">
          <div className="flex pl-[3px]">
            <Tab x="" bg="bg-[#303030]" label="Timeline" icon={<svg viewBox="0 0 16 12" className="w-4 h-3"><path d="M0 3l14-3v4L1 7z" fill="#cfd9f0" /><path d="M2 8l14-3v4L3 12z" fill="#8da4d8" /></svg>} />
            <Tab x="" label="Compiler Results" icon={<svg viewBox="0 0 14 16" className="w-[14px] h-4"><rect x="0" y="0" width="14" height="16" rx="1" fill="#dfe6f5" /><path d="M3 3l4 4-4 4M7 13h5" fill="none" stroke="#2a4f9c" strokeWidth="1.5" /></svg>} />
          </div>
          <div className="bg-[#3e3e3e] grow pl-[5px] pr-[8px] pt-[6px] flex flex-col">
            <div className="h-[181px] bg-[#232323]" />
            <div className="grow flex items-center justify-end pr-[4px] text-[12px] text-[#6c6c6c] tracking-[0.2px]">Clear</div>
          </div>
        </div>
      </div>
    </div>
  );
}
